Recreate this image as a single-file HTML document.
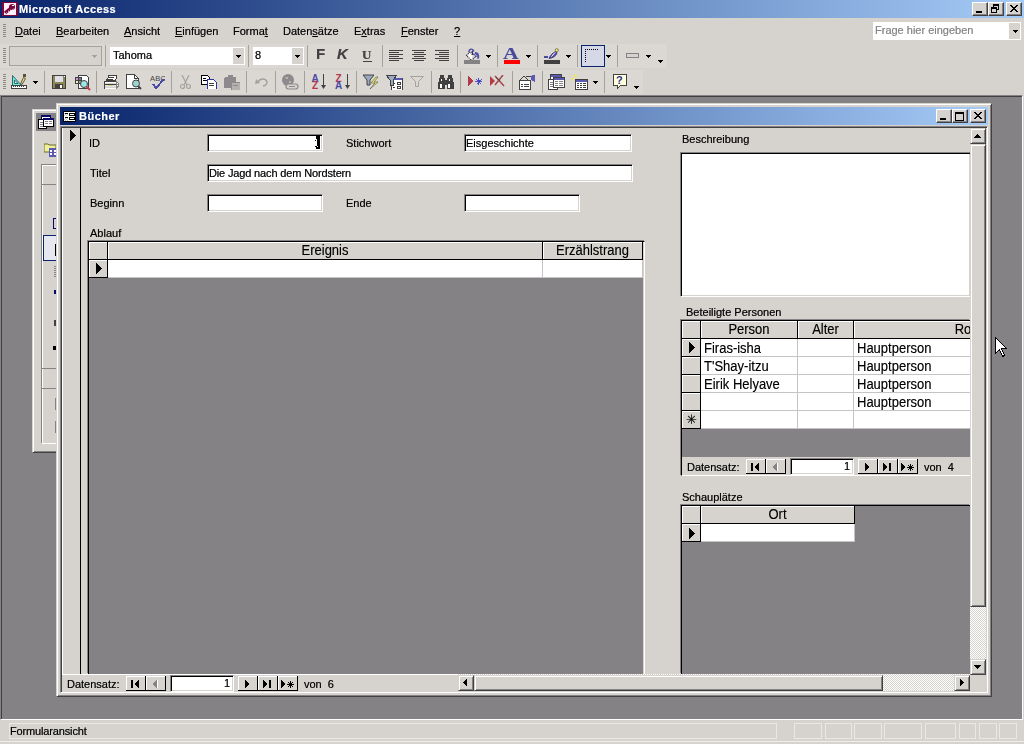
<!DOCTYPE html>
<html><head><meta charset="utf-8">
<style>
*{margin:0;padding:0;box-sizing:border-box}
html,body{width:1024px;height:744px;overflow:hidden;background:#D6D3CE;font-family:"Liberation Sans",sans-serif;font-size:11px;color:#000}
.a{position:absolute}
.t{position:absolute;white-space:nowrap;line-height:13px;font-size:11px;filter:url(#crisp)}
.u{text-decoration:underline}
.sep{position:absolute;width:1px;background:#A5A29C;border-right:1px solid #fff;width:2px}
.grip{position:absolute;width:3px;background:repeating-linear-gradient(to bottom,#8C8A84 0 1px,transparent 1px 2px)}
.arr{position:absolute;width:5px;height:3px;--c:#000;background:linear-gradient(var(--c),var(--c)) 0 0/5px 1px no-repeat,linear-gradient(var(--c),var(--c)) 1px 1px/3px 1px no-repeat,linear-gradient(var(--c),var(--c)) 2px 2px/1px 1px no-repeat}
.btn{position:absolute;background:#D6D3CE;border-top:1px solid #fff;border-left:1px solid #fff;border-right:1px solid #424142;border-bottom:1px solid #424142;box-shadow:inset -1px -1px 0 #848284}
.sunk{position:absolute;background:#fff;border-top:1px solid #848284;border-left:1px solid #848284;border-right:1px solid #fff;border-bottom:1px solid #fff;box-shadow:inset 1px 1px 0 #000,inset -1px -1px 0 #D6D3CE}
.dsh{position:absolute;background:#D6D3CE}
.hc{position:absolute;background:#D6D3CE;border-right:1px solid #000;border-bottom:1px solid #000;box-shadow:inset 1px 1px 0 #fff}
.cell{position:absolute;background:#fff;border-right:1px solid #C6C3C6;border-bottom:1px solid #C6C3C6}
.th{position:absolute;filter:url(#crisp2);text-align:center;font-size:13px;line-height:14px;white-space:nowrap;overflow:hidden;transform:scaleY(1.1);transform-origin:50% 11px}
.td{position:absolute;filter:url(#crisp2);font-size:13px;line-height:15px;white-space:nowrap;transform:scaleY(1.1);transform-origin:0 12px}
.sb{position:absolute;background:#D6D3CE;border-top:1px solid #D6D3CE;border-left:1px solid #D6D3CE;border-right:1px solid #424142;border-bottom:1px solid #424142;box-shadow:inset 1px 1px 0 #fff,inset -1px -1px 0 #848284}
.nb{position:absolute;width:20px;height:15px;background:#D6D3CE;border-right:1px solid #000;border-bottom:1px solid #000;box-shadow:inset 1px 1px 0 #fff}
.nb svg{position:absolute;left:0;top:0}
.sb i{position:absolute;display:block}
.aup{left:4px;top:5px;border-left:4px solid transparent;border-right:4px solid transparent;border-bottom:4px solid #000}
.adn{left:4px;top:5px;border-left:4px solid transparent;border-right:4px solid transparent;border-top:4px solid #000}
.alt{left:4px;top:4px;border-top:4px solid transparent;border-bottom:4px solid transparent;border-right:4px solid #000}
.art{left:6px;top:4px;border-top:4px solid transparent;border-bottom:4px solid transparent;border-left:4px solid #000}
.sp{position:absolute;width:1px;height:22px;background:#A5A29C}
.btn i{position:absolute;display:block}
.gmin{left:3px;top:8px;width:6px;height:2px;background:#000}
.gmax{left:2px;top:2px;width:9px;height:9px;border:1px solid #000;border-top-width:2px}
.gres1{left:4px;top:1px;width:6px;height:6px;border:1px solid #000;border-top-width:2px}
.gres2{left:2px;top:4px;width:6px;height:6px;border:1px solid #000;border-top-width:2px;background:#D6D3CE}
.stp{position:absolute;top:723px;height:16px;border:1px solid #E9E8E5}
.check{background-color:#ECEBE8;background-image:repeating-conic-gradient(#fff 0 25%,#D6D3CE 0 50%);background-size:2px 2px}
</style></head><body>
<svg width="0" height="0" style="position:absolute"><filter id="crisp" x="0" y="0" width="100%" height="100%"><feComponentTransfer><feFuncA type="gamma" exponent="0.65" amplitude="1" offset="0"/></feComponentTransfer></filter><filter id="crisp2" x="0" y="0" width="100%" height="100%"><feComponentTransfer><feFuncA type="gamma" exponent="0.75" amplitude="1" offset="0"/></feComponentTransfer></filter></svg>

<!-- Title bar -->
<div class="a" style="left:0;top:0;width:1024px;height:18px;background:linear-gradient(to right,#08246B,#A5CBF7)"></div>
<svg class="a" style="left:2px;top:2px" width="16" height="14" shape-rendering="crispEdges">
<rect x="0" y="0" width="16" height="14" fill="#7B0839"/>
<rect x="2" y="1" width="12" height="12" fill="#FFF0FF"/>
<path d="M3 11 L9 6" stroke="#7B0839" stroke-width="3.2" fill="none" shape-rendering="auto"/>
<circle cx="10" cy="5" r="3" fill="#7B0839" shape-rendering="auto"/>
<rect x="10" y="3" width="2" height="1" fill="#FFF0FF"/>
<path d="M3.5 11.5 L4.5 10.5 M6 9.5 L7 9 M8 8.5 L9 8 M10.5 7.5 L11.5 7" stroke="#FFF0FF" stroke-width="1" shape-rendering="auto"/>
</svg>
<div class="t" style="left:19px;top:3px;color:#fff;font-weight:bold;font-size:11px;line-height:13px;letter-spacing:0.4px">Microsoft Access</div>
<div class="btn" style="left:972px;top:2px;width:16px;height:14px"><i class="gmin"></i></div>
<div class="btn" style="left:988px;top:2px;width:16px;height:14px"><i class="gres1"></i><i class="gres2"></i></div>
<div class="btn" style="left:1006px;top:2px;width:16px;height:14px"><svg class="a" style="left:3px;top:2px" width="8" height="7" shape-rendering="crispEdges"><path d="M0 0h2v1h-2zM6 0h2v1h-2zM1 1h2v1h-2zM5 1h2v1h-2zM2 2h4v1h-4zM3 3h2v1h-2zM2 4h4v1h-4zM1 5h2v1h-2zM5 5h2v1h-2zM0 6h2v1h-2zM6 6h2v1h-2z" fill="#000"/></svg></div>

<!-- Menu bar -->
<div class="grip" style="left:3px;top:24px;height:13px"></div>
<div class="t" style="left:15px;top:25px"><span class="u">D</span>atei</div>
<div class="t" style="left:56px;top:25px"><span class="u">B</span>earbeiten</div>
<div class="t" style="left:124px;top:25px"><span class="u">A</span>nsicht</div>
<div class="t" style="left:175px;top:25px"><span class="u">E</span>infügen</div>
<div class="t" style="left:233px;top:25px">Forma<span class="u">t</span></div>
<div class="t" style="left:283px;top:25px">Daten<span class="u">s</span>ätze</div>
<div class="t" style="left:354px;top:25px">E<span class="u">x</span>tras</div>
<div class="t" style="left:401px;top:25px"><span class="u">F</span>enster</div>
<div class="t" style="left:454px;top:25px"><span class="u">?</span></div>
<div class="a" style="left:873px;top:22px;width:148px;height:18px;background:#fff"></div>
<div class="t" style="left:875px;top:24px;color:#848284">Frage hier eingeben</div>
<div class="a" style="left:1009px;top:23px;width:11px;height:16px;background:#D6D3CE"></div>
<div class="arr" style="left:1013px;top:30px"></div>

<!-- Toolbars -->
<div class="a" style="left:0;top:44px;width:667px;height:24px;background:#DBD8D3"></div>
<div class="a" style="left:0;top:70px;width:643px;height:24px;background:#DBD8D3"></div>
<!-- TB1 -->
<div class="grip" style="left:3px;top:48px;height:15px"></div>
<div class="a" style="left:9px;top:46px;width:93px;height:20px;border:1px solid #A5A29C;background:#D6D3CE"></div>
<div class="arr" style="left:92px;top:55px;--c:#A5A29C"></div>
<div class="sp" style="left:105px;top:45px"></div>
<div class="a" style="left:110px;top:47px;width:135px;height:18px;background:#fff"></div>
<div class="t" style="left:113px;top:49px">Tahoma</div>
<div class="a" style="left:233px;top:48px;width:11px;height:16px;background:#D6D3CE"></div>
<div class="arr" style="left:236px;top:55px"></div>
<div class="sp" style="left:248px;top:45px"></div>
<div class="a" style="left:253px;top:47px;width:51px;height:18px;background:#fff"></div>
<div class="t" style="left:255px;top:49px">8</div>
<div class="a" style="left:292px;top:48px;width:11px;height:16px;background:#D6D3CE"></div>
<div class="arr" style="left:295px;top:55px"></div>
<div class="sp" style="left:307px;top:45px"></div>
<div class="t" style="left:316px;top:46px;font-weight:bold;font-size:15px;line-height:16px;color:#424142">F</div>
<div class="t" style="left:337px;top:46px;font-weight:bold;font-style:italic;font-size:15px;line-height:16px;color:#424142">K</div>
<div class="t" style="left:362px;top:48px;font-family:'Liberation Serif',serif;font-weight:bold;font-size:13px;line-height:14px;color:#424142">U</div>
<div class="a" style="left:363px;top:61px;width:9px;height:1px;background:#424142"></div>
<div class="sp" style="left:382px;top:45px"></div>
<svg class="a" style="left:389px;top:50px" width="61" height="11" shape-rendering="crispEdges">
<g fill="#424142">
<rect x="0" y="0" width="14" height="1"/><rect x="0" y="2" width="10" height="1"/><rect x="0" y="4" width="14" height="1"/><rect x="0" y="6" width="10" height="1"/><rect x="0" y="8" width="14" height="1"/><rect x="0" y="10" width="10" height="1"/>
<rect x="23" y="0" width="14" height="1"/><rect x="25" y="2" width="10" height="1"/><rect x="23" y="4" width="14" height="1"/><rect x="25" y="6" width="10" height="1"/><rect x="23" y="8" width="14" height="1"/><rect x="25" y="10" width="10" height="1"/>
<rect x="46" y="0" width="14" height="1"/><rect x="50" y="2" width="10" height="1"/><rect x="46" y="4" width="14" height="1"/><rect x="50" y="6" width="10" height="1"/><rect x="46" y="8" width="14" height="1"/><rect x="50" y="10" width="10" height="1"/>
</g></svg>
<div class="sp" style="left:457px;top:45px"></div>
<svg class="a" style="left:464px;top:47px" width="17" height="17">
<path d="M2.5 8.5L6.5 4.5L12 9.5L7.5 13.5Z" fill="#fff"/>
<path d="M7.5 13L12 9.5L9 6.5Z" fill="#D6D3DE"/>
<path d="M11 5C14 5 16 7 15 11.5L13.5 12L13 9L11 7Z" fill="#5252B5"/>
<path d="M2.5 8.5L6.5 4.5L12 9.5L7.5 13.5Z" fill="none" stroke="#313131" stroke-width="1.1" stroke-dasharray="1.2 0.8"/>
<path d="M5 5.5C4.5 1.5 9 1 10 4.5" fill="none" stroke="#4A4AA5" stroke-width="1.3"/>
<path d="M8.5 3.5V8M7 6.5L8.5 8L10 6.5" fill="none" stroke="#31316B" stroke-width="1"/>
<rect x="0" y="13" width="16" height="4" fill="#848284"/>
</svg>
<div class="arr" style="left:486px;top:55px"></div>
<div class="sp" style="left:497px;top:45px"></div>
<div class="t" style="left:503px;top:45px;font-family:'Liberation Serif',serif;font-weight:bold;font-size:16px;line-height:17px;color:#4A4A9C;transform:scaleX(1.35);transform-origin:0 0">A</div>
<div class="a" style="left:504px;top:60px;width:16px;height:4px;background:#F00"></div>
<div class="arr" style="left:526px;top:55px"></div>
<div class="sp" style="left:537px;top:45px"></div>
<svg class="a" style="left:544px;top:47px" width="17" height="17">
<path d="M5 11.5C6.5 8 9 5.5 12 4.5L13 6C12 9 9 11 5 11.5Z" fill="#5A52B5" stroke="#29296B" stroke-width="0.8"/>
<path d="M7.5 9.5L11 5.5" stroke="#fff" stroke-width="1"/>
<circle cx="12.8" cy="3.2" r="1.6" fill="#EFEF5A" stroke="#424142" stroke-width="0.6"/>
<rect x="0" y="9" width="4" height="2" fill="#4A4A9C"/>
<rect x="0" y="13" width="16" height="4" fill="#424142"/>
</svg>
<div class="arr" style="left:566px;top:55px"></div>
<div class="sp" style="left:577px;top:45px"></div>
<div class="a" style="left:581px;top:45px;width:24px;height:22px;border:1px solid #08246B;background:#D6D7E7"></div>
<div class="a" style="left:585px;top:49px;width:1px;height:13px;background:repeating-linear-gradient(#000 0 1px,transparent 1px 2px)"></div>
<div class="a" style="left:585px;top:49px;width:13px;height:1px;background:repeating-linear-gradient(to right,#000 0 1px,transparent 1px 2px)"></div>
<div class="arr" style="left:606px;top:55px"></div>
<div class="sp" style="left:617px;top:45px"></div>
<div class="a" style="left:626px;top:53px;width:13px;height:5px;border:1px solid #848284;background:#D6D3CE"></div>
<div class="arr" style="left:646px;top:55px"></div>
<div class="arr" style="left:658px;top:60px"></div>

<!-- TB2 -->
<div class="grip" style="left:3px;top:74px;height:15px"></div>
<svg class="a" style="left:11px;top:74px" width="16" height="16" shape-rendering="crispEdges">
<path d="M1.5 1.5V11.5H10.5Z" fill="#6BEFDE" stroke="#316B6B" stroke-width="1" shape-rendering="auto"/>
<path d="M3.5 6V9.5H7Z" fill="#fff" stroke="#316B6B" stroke-width="1" shape-rendering="auto"/>
<rect x="0.5" y="11.5" width="15" height="3" fill="#fff" stroke="#424142"/>
<rect x="2" y="12" width="1" height="1" fill="#424142"/><rect x="4" y="12" width="1" height="1" fill="#424142"/><rect x="6" y="12" width="1" height="1" fill="#424142"/><rect x="8" y="12" width="1" height="1" fill="#424142"/><rect x="10" y="12" width="1" height="1" fill="#424142"/><rect x="12" y="12" width="1" height="1" fill="#424142"/>
<path d="M9.5 10L12.5 3.5L14.5 4.5L11 10.5Z" fill="#EFEF9C" stroke="#5A5231" stroke-width="1" shape-rendering="auto"/>
<rect x="12" y="0" width="3" height="3" fill="#5A5231"/>
</svg>
<div class="arr" style="left:33px;top:81px"></div>
<div class="sp" style="left:44px;top:71px"></div>
<svg class="a" style="left:52px;top:75px" width="14" height="14" shape-rendering="crispEdges">
<rect x="0" y="0" width="14" height="14" fill="#424142"/>
<rect x="1" y="1" width="12" height="12" fill="#8C8A52"/>
<rect x="3" y="1" width="8" height="6" fill="#DEDEEF"/>
<rect x="12" y="1" width="1" height="1" fill="#fff"/>
<rect x="3" y="9" width="8" height="4" fill="#424142"/>
<rect x="8" y="10" width="2" height="3" fill="#fff"/>
</svg>
<svg class="a" style="left:75px;top:75px" width="16" height="16" shape-rendering="crispEdges">
<path d="M3.5 0.5h8l2 2v11h-10z" fill="#fff" stroke="#424142"/>
<rect x="0" y="2" width="7" height="7" fill="#424142"/>
<rect x="1" y="3" width="2" height="2" fill="#E78CC6"/><rect x="4" y="3" width="2" height="2" fill="#6B7BA5"/><rect x="1" y="6" width="2" height="2" fill="#EFEFB5"/><rect x="4" y="6" width="2" height="2" fill="#8C9C8C"/>
<circle cx="9" cy="9" r="3.5" fill="#9CE7E7" stroke="#424142" stroke-width="1" shape-rendering="auto"/>
<path d="M11.5 11.5L15 15" stroke="#C63A4A" stroke-width="2" shape-rendering="auto"/>
</svg>
<div class="sp" style="left:96px;top:71px"></div>
<svg class="a" style="left:103px;top:74px" width="17" height="16" shape-rendering="crispEdges">
<path d="M5.5 1.5h8v3l-1 1.5h-9l2-3z" fill="#fff" stroke="#424142"/>
<rect x="5" y="3" width="6" height="1" fill="#424142"/><rect x="4" y="5" width="6" height="1" fill="#424142"/>
<path d="M1.5 7.5h12v7h-12z" fill="#D6D3CE" stroke="#424142"/>
<rect x="2" y="8" width="11" height="1" fill="#fff"/><rect x="1" y="10" width="13" height="1" fill="#424142"/>
<rect x="2" y="11" width="11" height="2" fill="#DEDEE7"/><rect x="5" y="11" width="5" height="1" fill="#D6D77B"/>
<rect x="2" y="14" width="11" height="1" fill="#fff"/>
<path d="M13 7h1v1h1v1h1v4h-1v1h-1v1h-1z" fill="#848284"/><path d="M14 9h1v1h-1zM14 11h1v1h-1z" fill="#fff"/>
</svg>
<svg class="a" style="left:126px;top:74px" width="17" height="16" shape-rendering="crispEdges">
<path d="M0.5 0.5h8l4 4v10h-12z" fill="#fff" stroke="#424142"/>
<path d="M8.5 0.5v4h4" fill="none" stroke="#424142"/>
<circle cx="10" cy="9.5" r="3.5" fill="#9CD3CE" stroke="#424142" stroke-width="1" shape-rendering="auto"/>
<path d="M12.5 12.5l2.5 2.5" stroke="#424142" stroke-width="2" shape-rendering="auto"/>
</svg>
<svg class="a" style="left:150px;top:75px" width="15" height="15" shape-rendering="crispEdges">
<text x="0" y="6" font-family="Liberation Sans" font-size="7.5" fill="#424142" letter-spacing="0.3">ABC</text>
<path d="M3 9 L6 13 L14 4" fill="none" stroke="#4A4AA5" stroke-width="2"/>
</svg>
<div class="sp" style="left:171px;top:71px"></div>
<svg class="a" style="left:180px;top:75px" width="11" height="15">
<path d="M2 0 L7 10 M9 0 L4 10" stroke="#A5A29C" stroke-width="1.2" fill="none"/>
<circle cx="2.5" cy="11.5" r="2" fill="none" stroke="#A5A29C" stroke-width="1.2"/><circle cx="8.5" cy="11.5" r="2" fill="none" stroke="#A5A29C" stroke-width="1.2"/>
</svg>
<svg class="a" style="left:201px;top:75px" width="16" height="14" shape-rendering="crispEdges">
<path d="M0 0h6l2 2v7h-8z" fill="#fff" stroke="#000" stroke-width="1"/>
<rect x="2" y="3" width="3" height="1" fill="#000"/><rect x="2" y="5" width="4" height="1" fill="#000"/>
<path d="M6 4h6l3 3v7h-9z" fill="#fff" stroke="#31319C" stroke-width="1"/>
<rect x="8" y="8" width="5" height="1" fill="#424142"/><rect x="8" y="10" width="5" height="1" fill="#424142"/>
</svg>
<svg class="a" style="left:224px;top:75px" width="16" height="15" shape-rendering="crispEdges">
<rect x="0" y="2" width="12" height="11" rx="2" fill="#8C8A8C"/><rect x="4" y="0" width="5" height="3" fill="#8C8A8C"/>
<rect x="7" y="7" width="9" height="8" fill="#B5B2AD" stroke="#8C8A8C" stroke-width="1"/>
<rect x="9" y="10" width="5" height="1" fill="#8C8A8C"/>
</svg>
<div class="sp" style="left:246px;top:71px"></div>
<svg class="a" style="left:255px;top:77px" width="13" height="10">
<path d="M3 5 C5 1 11 1 12 5 C12 8 9 9 8 9" fill="none" stroke="#A5A29C" stroke-width="1.5"/>
<path d="M0 7 L1 2 L5 6 Z" fill="#A5A29C"/>
</svg>
<div class="sp" style="left:275px;top:71px"></div>
<svg class="a" style="left:282px;top:74px" width="17" height="16">
<circle cx="6" cy="6" r="6" fill="#8C8A8C"/>
<path d="M3 3h3v2h-2z M7 7h2v2h-2z" fill="#B5B2AD"/>
<rect x="4" y="10" width="12" height="5" rx="2.5" fill="#D6D3CE" stroke="#8C8A8C" stroke-width="1.2"/>
<rect x="7" y="12" width="6" height="1" fill="#8C8A8C"/>
</svg>
<div class="sp" style="left:304px;top:71px"></div>
<svg class="a" style="left:311px;top:74px" width="40" height="16">
<text x="0.5" y="7.5" font-family="Liberation Sans" font-weight="bold" font-size="10" fill="#4A4AA5">A</text>
<text x="1" y="15" font-family="Liberation Sans" font-weight="bold" font-size="10" fill="#B5394A">Z</text>
<rect x="12" y="0" width="1" height="12" fill="#424142"/><path d="M10 11h5l-2.5 4z" fill="#424142"/>
<text x="24.5" y="7.5" font-family="Liberation Sans" font-weight="bold" font-size="10" fill="#B5394A">Z</text>
<text x="24" y="15" font-family="Liberation Sans" font-weight="bold" font-size="10" fill="#4A4AA5">A</text>
<rect x="36" y="0" width="1" height="12" fill="#424142"/><path d="M34 11h5l-2.5 4z" fill="#424142"/>
</svg>
<div class="sp" style="left:356px;top:71px"></div>
<svg class="a" style="left:363px;top:74px" width="17" height="16">
<path d="M0 1h11l-4 5v5h-3v-5z" fill="#9CAABD" stroke="#424142" stroke-width="1"/>
<path d="M13 3 L8 9 H12 L7 15 L15 8 H11 L15 3z" fill="#EFEF5A" stroke="#525152" stroke-width="0.6"/>
</svg>
<svg class="a" style="left:386px;top:74px" width="17" height="16" shape-rendering="crispEdges">
<rect x="5" y="4" width="11" height="12" fill="#fff" stroke="#424142" stroke-width="1"/>
<rect x="5" y="4" width="11" height="2" fill="#5A5AB5"/>
<rect x="11" y="8" width="3" height="2" fill="none" stroke="#424142"/><rect x="11" y="12" width="3" height="2" fill="none" stroke="#424142"/>
<rect x="7" y="9" width="2" height="1" fill="#424142"/><rect x="7" y="13" width="2" height="1" fill="#424142"/>
<path d="M0 1h11l-4 5v5h-3v-5z" fill="#9CAABD" stroke="#424142" stroke-width="1"/>
</svg>
<svg class="a" style="left:410px;top:76px" width="15" height="11">
<path d="M0.5 0.5h13l-5 5v5h-3v-5z" fill="none" stroke="#A5A29C" stroke-width="1"/>
</svg>
<div class="sp" style="left:431px;top:71px"></div>
<svg class="a" style="left:438px;top:75px" width="16" height="14" shape-rendering="crispEdges">
<rect x="2" y="0" width="4" height="3" fill="#424142"/><rect x="10" y="0" width="4" height="3" fill="#424142"/>
<rect x="1" y="3" width="6" height="11" fill="#424142"/><rect x="9" y="3" width="6" height="11" fill="#424142"/><rect x="6" y="5" width="4" height="5" fill="#424142"/>
<rect x="0" y="7" width="2" height="7" fill="#424142"/><rect x="14" y="7" width="2" height="7" fill="#424142"/>
<rect x="2" y="9" width="2" height="4" fill="#fff"/><rect x="10" y="9" width="2" height="4" fill="#fff"/><rect x="3" y="4" width="1" height="2" fill="#fff"/><rect x="11" y="4" width="1" height="2" fill="#fff"/>
</svg>
<div class="sp" style="left:460px;top:71px"></div>
<svg class="a" style="left:468px;top:76px" width="15" height="11" shape-rendering="crispEdges">
<path d="M0 0 L5 5 L0 10 Z" fill="#B5394A"/>
<path d="M7 5h7M10.5 1.5v7M8 2.5l5 5M13 2.5l-5 5" stroke="#4242C6" stroke-width="0.9"/><rect x="9.5" y="4" width="2" height="2" fill="#4242C6"/>
</svg>
<svg class="a" style="left:490px;top:75px" width="15" height="12">
<path d="M0 1 L5 6 L0 11 Z" fill="#B5394A"/>
<path d="M5 1 L14 11 M13 0 L5 10" stroke="#A54A52" stroke-width="1.6"/>
<path d="M6 2 L10 6" stroke="#424142" stroke-width="1"/>
</svg>
<div class="sp" style="left:512px;top:71px"></div>
<svg class="a" style="left:519px;top:75px" width="17" height="15" shape-rendering="crispEdges">
<rect x="0.5" y="5.5" width="11" height="9" fill="#fff" stroke="#424142"/>
<rect x="2" y="9" width="2" height="1" fill="#424142"/><rect x="5" y="9" width="5" height="1" fill="#424142"/><rect x="2" y="11" width="2" height="1" fill="#424142"/><rect x="5" y="11" width="5" height="1" fill="#424142"/>
<path d="M1 5 L5 1 L9 5" fill="none" stroke="#424142" stroke-width="1"/>
<rect x="7" y="1" width="6" height="1" fill="#424142"/>
<path d="M12 1 L16 -1 V7 L12 5z" fill="#5A5AB5"/>
</svg>
<div class="sp" style="left:542px;top:71px"></div>
<svg class="a" style="left:548px;top:74px" width="17" height="16" shape-rendering="crispEdges">
<rect x="2.5" y="0.5" width="11" height="10" fill="#fff" stroke="#424142"/><rect x="3" y="1" width="10" height="2" fill="#5A5AB5"/>
<rect x="0.5" y="5.5" width="9" height="10" fill="#fff" stroke="#424142"/>
<rect x="2" y="8" width="6" height="1" fill="#848284"/><rect x="2" y="10" width="6" height="1" fill="#848284"/><rect x="2" y="12" width="6" height="1" fill="#848284"/>
<rect x="5.5" y="3.5" width="11" height="10" fill="#fff" stroke="#424142"/><rect x="6" y="4" width="10" height="2" fill="#5A5AB5"/>
<rect x="7" y="7" width="3" height="1" fill="#848284"/><rect x="11" y="7" width="4" height="1" fill="#848284"/><rect x="7" y="9" width="3" height="1" fill="#848284"/><rect x="11" y="9" width="4" height="1" fill="#848284"/><rect x="7" y="11" width="3" height="1" fill="#848284"/><rect x="11" y="11" width="4" height="1" fill="#848284"/>
</svg>
<svg class="a" style="left:571px;top:74px" width="17" height="16" shape-rendering="crispEdges">
<path d="M1 1 L4 4 M4 0v3 M0 4h3 M7 1 L5 3 M1 7 L3 5" stroke="#EFE75A" stroke-width="1"/>
<rect x="4.5" y="5.5" width="12" height="10" fill="#fff" stroke="#424142"/><rect x="5" y="6" width="11" height="2" fill="#5A5AB5"/>
<rect x="6" y="9" width="2" height="1" fill="#424142"/><rect x="9" y="9" width="2" height="1" fill="#424142"/><rect x="12" y="9" width="3" height="1" fill="#424142"/>
<rect x="6" y="11" width="2" height="1" fill="#424142"/><rect x="9" y="11" width="2" height="1" fill="#424142"/><rect x="12" y="11" width="3" height="1" fill="#424142"/>
<rect x="6" y="13" width="2" height="1" fill="#424142"/><rect x="9" y="13" width="2" height="1" fill="#424142"/><rect x="12" y="13" width="3" height="1" fill="#424142"/>
</svg>
<div class="arr" style="left:593px;top:81px"></div>
<div class="sp" style="left:604px;top:71px"></div>
<svg class="a" style="left:613px;top:74px" width="14" height="16" shape-rendering="crispEdges">
<path d="M0.5 0.5h13v11h-6l-3 3v-3h-4z" fill="#FFFFDE" stroke="#424142"/>
<text x="3" y="10" font-family="Liberation Sans" font-weight="bold" font-size="11" fill="#31318C">?</text>
</svg>
<div class="arr" style="left:634px;top:86px"></div>

<!-- MDI client -->
<div class="a" style="left:0;top:95px;width:1023px;height:625px;background:#848284;border-top:1px solid #848284;border-left:1px solid #848284;border-right:1px solid #fff;border-bottom:1px solid #fff;box-shadow:inset 1px 1px 0 #424142"></div>

<!-- DB window (behind) -->
<div class="a" style="left:32px;top:109px;width:40px;height:344px;background:#D6D3CE;border-top:1px solid #D6D3CE;border-left:1px solid #D6D3CE;border-bottom:1px solid #424142;box-shadow:inset 1px 1px 0 #fff,inset 0 -1px 0 #848284"></div>
<div class="a" style="left:36px;top:113px;width:30px;height:18px;background:#848284"></div>
<svg class="a" style="left:38px;top:114px" width="16" height="16" viewBox="0 0 16 16">
<rect x="3" y="1" width="10" height="9" fill="#000"/><rect x="3" y="1" width="10" height="2" fill="#08086B"/><rect x="4" y="3" width="8" height="6" fill="#fff"/>
<rect x="0" y="5" width="9" height="10" fill="#000"/><rect x="1" y="6" width="7" height="8" fill="#fff"/><rect x="2" y="8" width="5" height="1" fill="#848284"/><rect x="2" y="10" width="5" height="1" fill="#848284"/><rect x="2" y="12" width="5" height="1" fill="#848284"/>
<rect x="5" y="4" width="11" height="9" fill="#000"/><rect x="5" y="4" width="11" height="2" fill="#08086B"/><rect x="6" y="6" width="9" height="6" fill="#fff"/><rect x="7" y="7" width="3" height="1" fill="#848284"/><rect x="11" y="7" width="3" height="1" fill="#848284"/><rect x="7" y="9" width="3" height="1" fill="#848284"/><rect x="11" y="9" width="3" height="1" fill="#848284"/>
</svg>
<svg class="a" style="left:44px;top:141px" width="14" height="16" viewBox="0 0 14 16">
<path d="M0 3h4l1 1h7v7H0z" fill="#EFEF9C" stroke="#6B6B29" stroke-width="1"/>
<rect x="5" y="7" width="9" height="9" fill="#5A5AB5"/><rect x="6" y="9" width="2" height="2" fill="#fff"/><rect x="6" y="12" width="2" height="2" fill="#fff"/><rect x="10" y="9" width="2" height="2" fill="#fff"/><rect x="10" y="12" width="2" height="2" fill="#fff"/>
</svg>
<div class="a" style="left:41px;top:164px;width:20px;height:280px;background:#D6D3CE;border-top:1px solid #848284;border-left:1px solid #848284;border-bottom:1px solid #fff;box-shadow:inset 1px 1px 0 #fff"></div>
<div class="a" style="left:42px;top:184px;width:20px;height:1px;background:#848284"></div>
<div class="a" style="left:42px;top:368px;width:20px;height:1px;background:#848284"></div>
<div class="a" style="left:42px;top:388px;width:20px;height:1px;background:#848284"></div>
<div class="a" style="left:43px;top:235px;width:20px;height:26px;border:1px solid #08246B;background:#E7E7EF"></div>
<div class="a" style="left:53px;top:218px;width:3px;height:11px;border:1px solid #08086B;border-right:none"></div>
<div class="a" style="left:55px;top:244px;width:1px;height:12px;background:#000"></div>
<div class="a" style="left:54px;top:266px;width:2px;height:11px;background:repeating-linear-gradient(#848284 0 1px,transparent 1px 2px)"></div>
<div class="a" style="left:54px;top:290px;width:2px;height:4px;background:#08086B"></div>
<div class="a" style="left:54px;top:320px;width:2px;height:6px;background:#424142"></div>
<div class="a" style="left:53px;top:346px;width:3px;height:4px;background:#000"></div>
<div class="a" style="left:55px;top:398px;width:1px;height:12px;background:#848284"></div>
<div class="a" style="left:55px;top:421px;width:1px;height:12px;background:#848284"></div>

<!-- Form window -->
<div class="a" id="frm" style="left:56px;top:103px;width:936px;height:594px;background:#D6D3CE;border-top:1px solid #D6D3CE;border-left:1px solid #D6D3CE;border-right:1px solid #424142;border-bottom:1px solid #424142;box-shadow:inset 1px 1px 0 #fff,inset -1px -1px 0 #848284"></div>
<div class="a" style="left:60px;top:107px;width:928px;height:18px;background:linear-gradient(to right,#08246B,#A5CBF7)"></div>
<svg class="a" style="left:63px;top:110px" width="14" height="13" shape-rendering="crispEdges">
<rect x="0" y="1" width="13" height="11" fill="#000"/><rect x="1" y="2" width="11" height="9" fill="#fff"/>
<path d="M1 3h1v1h-1zM3 3h1v1h-1zM2 4h1v1h-1zM4 4h1v1h-1zM1 5h1v1h-1zM3 5h1v1h-1zM2 8h1v1h-1zM4 8h1v1h-1zM1 9h1v1h-1zM3 9h1v1h-1zM2 10h1v1h-1zM4 10h1v1h-1z" fill="#C6C3C6"/>
<rect x="2" y="3" width="3" height="1" fill="#000"/><rect x="2" y="7" width="3" height="1" fill="#000"/>
<rect x="6" y="3" width="6" height="3" fill="#000"/><rect x="7" y="4" width="4" height="1" fill="#fff"/>
<rect x="6" y="7" width="6" height="3" fill="#000"/><rect x="7" y="8" width="4" height="1" fill="#fff"/>
</svg>
<div class="t" style="left:79px;top:110px;color:#fff;font-weight:bold;font-size:11px;line-height:13px;letter-spacing:0.5px">Bücher</div>
<div class="btn" style="left:936px;top:109px;width:16px;height:14px"><i class="gmin"></i></div>
<div class="btn" style="left:952px;top:109px;width:16px;height:14px"><i class="gmax"></i></div>
<div class="btn" style="left:970px;top:109px;width:16px;height:14px"><svg class="a" style="left:3px;top:2px" width="8" height="7" shape-rendering="crispEdges"><path d="M0 0h2v1h-2zM6 0h2v1h-2zM1 1h2v1h-2zM5 1h2v1h-2zM2 2h4v1h-4zM3 3h2v1h-2zM2 4h4v1h-4zM1 5h2v1h-2zM5 5h2v1h-2zM0 6h2v1h-2zM6 6h2v1h-2z" fill="#000"/></svg></div>
<!-- client sunken border -->
<div class="a" style="left:60px;top:126px;width:928px;height:567px;border-top:1px solid #848284;border-left:1px solid #848284;border-right:1px solid #fff;border-bottom:1px solid #fff;box-shadow:inset 1px 1px 0 #424142,inset -1px -1px 0 #D6D3CE"></div>
<!-- record selector -->
<div class="a" style="left:62px;top:128px;width:19px;height:546px;background:#D6D3CE;border-left:1px solid #fff;border-right:1px solid #000"></div>
<svg class="a" style="left:70px;top:130px" width="6" height="11" shape-rendering="crispEdges"><path d="M0 0h1v1h1v1h1v1h1v1h1v1h1v1h-1v1h-1v1h-1v1h-1v1h-1v1h-1z"/></svg>

<!-- labels -->
<div class="t" style="left:89px;top:137px">ID</div>
<div class="t" style="left:90px;top:167px">Titel</div>
<div class="t" style="left:90px;top:197px">Beginn</div>
<div class="t" style="left:90px;top:227px">Ablauf</div>
<div class="t" style="left:346px;top:137px">Stichwort</div>
<div class="t" style="left:346px;top:197px">Ende</div>
<div class="t" style="left:682px;top:133px">Beschreibung</div>
<div class="t" style="left:686px;top:306px">Beteiligte Personen</div>
<div class="t" style="left:682px;top:491px">Schauplätze</div>

<!-- text boxes -->
<div class="sunk" style="left:207px;top:134px;width:116px;height:18px"></div>
<svg class="a" style="left:315px;top:136px" width="5" height="13" shape-rendering="crispEdges"><rect x="1" y="0" width="4" height="13" fill="#000"/><rect x="1" y="3" width="1" height="7" fill="#fff"/><rect x="0" y="4" width="1" height="1" fill="#000"/><rect x="0" y="10" width="1" height="1" fill="#000"/><rect x="2" y="10" width="1" height="1" fill="#fff"/></svg>
<div class="sunk" style="left:207px;top:164px;width:426px;height:18px"></div>
<div class="t" style="left:209px;top:167px;letter-spacing:-0.15px">Die Jagd nach dem Nordstern</div>
<div class="sunk" style="left:207px;top:194px;width:116px;height:18px"></div>
<div class="sunk" style="left:464px;top:134px;width:168px;height:18px"></div>
<div class="t" style="left:466px;top:137px">Eisgeschichte</div>
<div class="sunk" style="left:464px;top:194px;width:116px;height:18px"></div>
<div class="sunk" style="left:680px;top:152px;width:290px;height:145px;border-right:none"></div>

<!-- Subform 1: Ablauf -->
<div class="a" style="left:88px;top:241px;width:557px;height:433px;background:#848284;border-top:1px solid #000;border-left:1px solid #000;border-right:1px solid #fff;box-shadow:inset -1px 0 0 #D6D3CE,-1px -1px 0 #848284"></div>
<div class="hc" style="left:89px;top:242px;width:19px;height:18px"></div>
<div class="hc" style="left:108px;top:242px;width:435px;height:18px"></div>
<div class="hc" style="left:543px;top:242px;width:100px;height:18px"></div>
<div class="th" style="left:108px;top:244px;width:434px">Ereignis</div>
<div class="th" style="left:543px;top:244px;width:99px">Erzählstrang</div>
<div class="hc" style="left:89px;top:260px;width:19px;height:18px"></div>
<svg class="a" style="left:96px;top:263px" width="6" height="11" shape-rendering="crispEdges"><path d="M0 0h1v1h1v1h1v1h1v1h1v1h1v1h-1v1h-1v1h-1v1h-1v1h-1v1h-1z"/></svg>
<div class="cell" style="left:108px;top:260px;width:435px;height:18px"></div>
<div class="cell" style="left:543px;top:260px;width:100px;height:18px"></div>

<!-- Subform 2: Beteiligte Personen -->
<div class="a" style="left:681px;top:320px;width:289px;height:156px;background:#848284;border-top:1px solid #000;border-left:1px solid #000;border-bottom:1px solid #fff;box-shadow:-1px -1px 0 #848284"></div>
<div class="hc" style="left:682px;top:321px;width:19px;height:18px"></div>
<div class="hc" style="left:701px;top:321px;width:97px;height:18px"></div>
<div class="hc" style="left:798px;top:321px;width:56px;height:18px"></div>
<div class="a" style="left:854px;top:321px;width:116px;height:18px;overflow:hidden"><div class="hc" style="left:0;top:0;width:232px;height:18px"></div><div class="th" style="left:0;top:2px;width:231px">Rolle</div></div>
<div class="th" style="left:701px;top:323px;width:96px">Person</div>
<div class="th" style="left:798px;top:323px;width:55px">Alter</div>

<div class="hc" style="left:682px;top:339px;width:19px;height:18px"></div>
<svg class="a" style="left:689px;top:342px" width="6" height="11" shape-rendering="crispEdges"><path d="M0 0h1v1h1v1h1v1h1v1h1v1h1v1h-1v1h-1v1h-1v1h-1v1h-1v1h-1z"/></svg>
<div class="hc" style="left:682px;top:357px;width:19px;height:18px"></div>
<div class="hc" style="left:682px;top:375px;width:19px;height:18px"></div>
<div class="hc" style="left:682px;top:393px;width:19px;height:18px"></div>
<div class="hc" style="left:682px;top:411px;width:19px;height:18px"></div>
<div class="t" style="left:686px;top:413px;font-size:13px;line-height:14px">✳</div>
<div class="cell" style="left:701px;top:339px;width:97px;height:90px;background:repeating-linear-gradient(#fff 0 17px,#C6C3C6 17px 18px)"></div>
<div class="cell" style="left:798px;top:339px;width:56px;height:90px;background:repeating-linear-gradient(#fff 0 17px,#C6C3C6 17px 18px)"></div>
<div class="cell" style="left:854px;top:339px;width:116px;height:90px;background:repeating-linear-gradient(#fff 0 17px,#C6C3C6 17px 18px);border-right:none"></div>
<div class="td" style="left:704px;top:341px">Firas-isha</div>
<div class="td" style="left:704px;top:359px">T'Shay-itzu</div>
<div class="td" style="left:704px;top:377px">Eirik Helyave</div>
<div class="td" style="left:857px;top:341px">Hauptperson</div>
<div class="td" style="left:857px;top:359px">Hauptperson</div>
<div class="td" style="left:857px;top:377px">Hauptperson</div>
<div class="td" style="left:857px;top:395px">Hauptperson</div>
<!-- nav 2 -->
<div class="a" style="left:682px;top:457px;width:288px;height:18px;background:#D6D3CE"></div>
<div class="t" style="left:687px;top:461px">Datensatz:</div>
<div class="nb" style="left:746px;top:459px"><svg width="20" height="15" shape-rendering="crispEdges"><rect x="5" y="4" width="2" height="8"/><path d="M9 7h1v-1h1v-1h1v-1h1v8h-1v-1h-1v-1h-1v-1h-1z"/></svg></div>
<div class="nb" style="left:766px;top:459px"><svg width="20" height="15" shape-rendering="crispEdges"><path d="M7 7h1v-1h1v-1h1v-1h1v8h-1v-1h-1v-1h-1v-1h-1z" fill="#848284"/><rect x="11" y="4" width="1" height="8" fill="#fff"/></svg></div>
<div class="sunk" style="left:790px;top:458px;width:64px;height:17px"></div>
<div class="t" style="left:844px;top:460px">1</div>
<div class="nb" style="left:858px;top:459px"><svg width="20" height="15" shape-rendering="crispEdges"><path d="M7 4h1v1h1v1h1v1h1v2h-1v1h-1v1h-1v1h-1z"/></svg></div>
<div class="nb" style="left:878px;top:459px"><svg width="20" height="15" shape-rendering="crispEdges"><path d="M5 4h1v1h1v1h1v1h1v2h-1v1h-1v1h-1v1h-1z"/><rect x="11" y="4" width="2" height="8"/></svg></div>
<div class="nb" style="left:898px;top:459px"><svg width="20" height="15" shape-rendering="crispEdges"><path d="M3 4h1v1h1v1h1v1h1v2h-1v1h-1v1h-1v1h-1z"/><path d="M12 5h1v7h-1zM9 8h7v1h-7zM10 6h1v1h-1zM14 6h1v1h-1zM10 10h1v1h-1zM14 10h1v1h-1zM11 7h3v3h-3z"/></svg></div>
<div class="t" style="left:924px;top:461px">von&nbsp;&nbsp;4</div>

<!-- Subform 3: Schauplaetze -->
<div class="a" style="left:681px;top:505px;width:289px;height:169px;background:#848284;border-top:1px solid #000;border-left:1px solid #000;box-shadow:-1px -1px 0 #848284"></div>
<div class="hc" style="left:682px;top:506px;width:19px;height:18px"></div>
<div class="hc" style="left:701px;top:506px;width:154px;height:18px"></div>
<div class="th" style="left:701px;top:508px;width:153px">Ort</div>
<div class="hc" style="left:682px;top:524px;width:19px;height:18px"></div>
<svg class="a" style="left:689px;top:528px" width="6" height="11" shape-rendering="crispEdges"><path d="M0 0h1v1h1v1h1v1h1v1h1v1h1v1h-1v1h-1v1h-1v1h-1v1h-1v1h-1z"/></svg>
<div class="cell" style="left:701px;top:524px;width:154px;height:18px"></div>

<!-- vertical scrollbar -->
<div class="a check" style="left:970px;top:128px;width:16px;height:547px"></div>
<div class="sb" style="left:970px;top:128px;width:16px;height:16px"><svg class="a" style="left:3px;top:5px" width="7" height="4" shape-rendering="crispEdges"><path d="M3 0h1v1h1v1h1v1h1v1h-7v-1h1v-1h1v-1h1z"/></svg></div>
<div class="sb" style="left:970px;top:144px;width:16px;height:463px"></div>
<div class="sb" style="left:970px;top:659px;width:16px;height:16px"><svg class="a" style="left:3px;top:5px" width="7" height="4" shape-rendering="crispEdges"><path d="M0 0h7v1h-1v1h-1v1h-1v1h-1v-1h-1v-1h-1v-1h-1z"/></svg></div>
<!-- horizontal scrollbar -->
<div class="a check" style="left:458px;top:674px;width:512px;height:17px"></div>
<div class="sb" style="left:458px;top:675px;width:16px;height:16px"><svg class="a" style="left:4px;top:3px" width="4" height="7" shape-rendering="crispEdges"><path d="M3 0h1v7h-1v-1h-1v-1h-1v-1h-1v-1h1v-1h1v-1h1z"/></svg></div>
<div class="sb" style="left:474px;top:675px;width:409px;height:16px"></div>
<div class="sb" style="left:954px;top:675px;width:16px;height:16px"><svg class="a" style="left:5px;top:3px" width="4" height="7" shape-rendering="crispEdges"><path d="M0 0h1v1h1v1h1v1h1v1h-1v1h-1v1h-1v1h-1z"/></svg></div>
<!-- main nav -->
<div class="a" style="left:62px;top:674px;width:396px;height:17px;background:#D6D3CE;border-top:1px solid #fff"></div>
<div class="t" style="left:67px;top:678px">Datensatz:</div>
<div class="nb" style="left:126px;top:676px"><svg width="20" height="15" shape-rendering="crispEdges"><rect x="5" y="4" width="2" height="8"/><path d="M9 7h1v-1h1v-1h1v-1h1v8h-1v-1h-1v-1h-1v-1h-1z"/></svg></div>
<div class="nb" style="left:146px;top:676px"><svg width="20" height="15" shape-rendering="crispEdges"><path d="M7 7h1v-1h1v-1h1v-1h1v8h-1v-1h-1v-1h-1v-1h-1z" fill="#848284"/><rect x="11" y="4" width="1" height="8" fill="#fff"/></svg></div>
<div class="sunk" style="left:170px;top:675px;width:64px;height:17px"></div>
<div class="t" style="left:224px;top:677px">1</div>
<div class="nb" style="left:238px;top:676px"><svg width="20" height="15" shape-rendering="crispEdges"><path d="M7 4h1v1h1v1h1v1h1v2h-1v1h-1v1h-1v1h-1z"/></svg></div>
<div class="nb" style="left:258px;top:676px"><svg width="20" height="15" shape-rendering="crispEdges"><path d="M5 4h1v1h1v1h1v1h1v2h-1v1h-1v1h-1v1h-1z"/><rect x="11" y="4" width="2" height="8"/></svg></div>
<div class="nb" style="left:278px;top:676px"><svg width="20" height="15" shape-rendering="crispEdges"><path d="M3 4h1v1h1v1h1v1h1v2h-1v1h-1v1h-1v1h-1z"/><path d="M12 5h1v7h-1zM9 8h7v1h-7zM10 6h1v1h-1zM14 6h1v1h-1zM10 10h1v1h-1zM14 10h1v1h-1zM11 7h3v3h-3z"/></svg></div>
<div class="t" style="left:304px;top:678px">von&nbsp;&nbsp;6</div>

<!-- status bar -->

<div class="stp" style="left:9px;width:768px"></div>
<div class="stp" style="left:794px;width:28px"></div>
<div class="stp" style="left:825px;width:27px"></div>
<div class="stp" style="left:854px;width:28px"></div>
<div class="stp" style="left:884px;width:38px"></div>
<div class="stp" style="left:925px;width:31px"></div>
<div class="stp" style="left:959px;width:17px"></div>
<div class="stp" style="left:979px;width:18px"></div>
<div class="stp" style="left:999px;width:18px"></div>
<div class="a" style="left:0;top:741px;width:1024px;height:1px;background:#EEEDEA"></div>
<div class="t" style="left:10px;top:725px;letter-spacing:-0.15px">Formularansicht</div>
<svg class="a" style="left:995px;top:337px" width="13" height="21" shape-rendering="crispEdges"><path d="M0.5 0.5V16.5L4.5 12.5L7.5 19.5L9.5 18.5L6.5 11.5H11.5Z" fill="#fff" stroke="#000" stroke-width="1"/></svg>

</body></html>
